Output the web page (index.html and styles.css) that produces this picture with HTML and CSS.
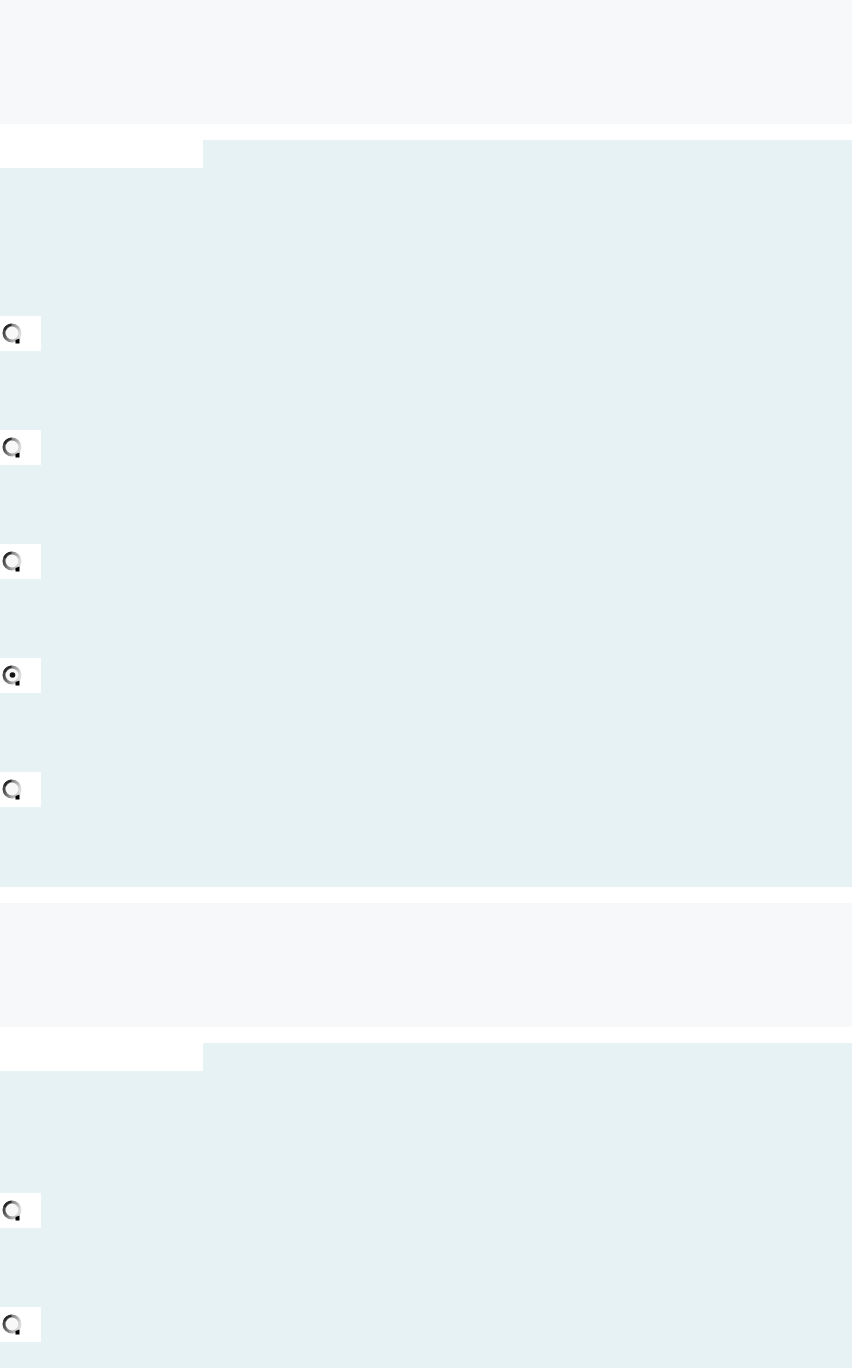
FILE: index.html
```html
<!DOCTYPE html>
<html lang="en">

<head>
    <meta charset="UTF-8" />
    <meta name="viewport" content="width=device-width, initial-scale=1" />
    <title>Survey</title>
    <link rel="stylesheet" href="styles.css">
</head>

<body>
    <div class="question-head"></div>
    <div class="question-body first">
        <div class="tab"></div>
        <div class="options">
            <div class="option"><svg class="radio" width="20" height="22" viewBox="0 0 20 22"><use href="#radio" /></svg></div>
            <div class="option"><svg class="radio" width="20" height="22" viewBox="0 0 20 22"><use href="#radio" /></svg></div>
            <div class="option"><svg class="radio" width="20" height="22" viewBox="0 0 20 22"><use href="#radio" /></svg></div>
            <div class="option"><svg class="radio" width="20" height="22" viewBox="0 0 20 22"><use href="#radio" /><circle cx="10.5" cy="11" r="2.8" fill="#111" /></svg></div>
            <div class="option"><svg class="radio" width="20" height="22" viewBox="0 0 20 22"><use href="#radio" /></svg></div>
        </div>
    </div>

    <div class="question-head"></div>
    <div class="question-body second">
        <div class="tab"></div>
        <div class="options">
            <div class="option"><svg class="radio" width="20" height="22" viewBox="0 0 20 22"><use href="#radio" /></svg></div>
            <div class="option"><svg class="radio" width="20" height="22" viewBox="0 0 20 22"><use href="#radio" /></svg></div>
        </div>
    </div>

    <!-- radio glyph -->
    <svg width="0" height="0" class="defs">
        <defs>
            <linearGradient id="ring" x1="0" y1="0.2" x2="1" y2="0.5">
                <stop offset="0" stop-color="#3c3c3c" />
                <stop offset="0.5" stop-color="#8c8c8c" />
                <stop offset="1" stop-color="#dcdcdc" />
            </linearGradient>
            <g id="radio">
                <circle cx="10" cy="11" r="8" fill="#f8f8f8" stroke="url(#ring)" stroke-width="3" />
                <path d="M2.5 8 Q4 3.5 9.5 2.6" stroke="#2a2a2a" stroke-width="2.4" fill="none" />
                <path d="M13.5 18 L17.5 16.5 L17.5 21.5 L13.5 21.5 Z" fill="#000" />
            </g>
        </defs>
    </svg>
</body>

</html>
```

FILE: styles.css
```css
body {
    margin: 0;
    background: #fff;
    font-family: "Liberation Sans", Arial, sans-serif;
}

.question-head {
    height: 124px;
    margin-bottom: 16px;
    background: #f7f8fa;
}

.question-body {
    background: #e6f2f3;
    margin-bottom: 16px;
}

.question-body .tab {
    width: 203px;
    height: 28px;
    background: #fff;
}

.first .options {
    padding: 148px 0 80px;
}

.second .options {
    padding: 122px 0 80px;
}

.options {
    display: flex;
    flex-direction: column;
    gap: 79px;
}

.option {
    width: 41px;
    height: 35px;
    background: #fff;
    box-sizing: border-box;
    padding: 6px 0 0 2px;
}

.radio {
    display: block;
}

.defs {
    position: absolute;
}
```
